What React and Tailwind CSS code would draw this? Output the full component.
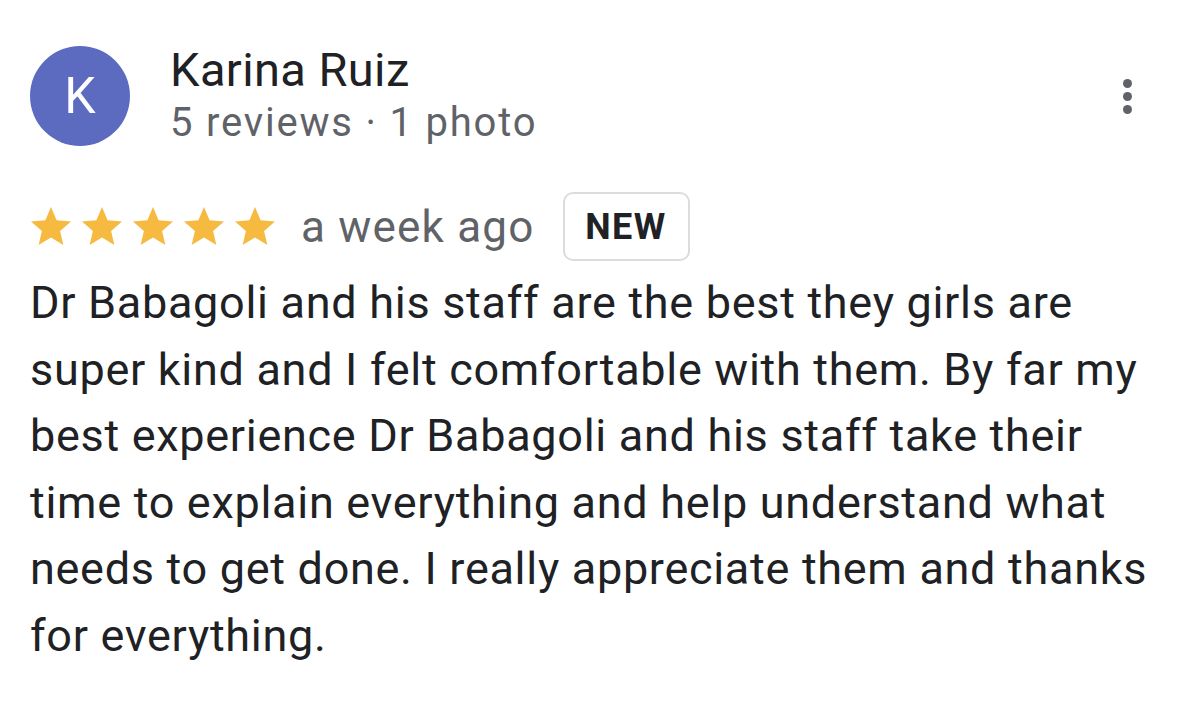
import React from "react";

const Star = () => (
    <svg viewBox="0 0 24 24" className="w-[48px] h-[48px]" fill="#f5ba3f">
        <path d="M12 17.27L18.18 21l-1.64-7.03L22 9.24l-7.19-.61L12 2 9.19 8.63 2 9.24l5.46 4.73L5.82 21z" />
    </svg>
);

export default function App() {
    return (
        <div className="w-[1200px] h-[709px] bg-white font-['Roboto',sans-serif] pl-[30px] pt-[44px]">
            <div className="flex items-start pr-[40px]">
                <div className="mt-[2px] w-[100px] h-[100px] rounded-full bg-[#5c6bc0] flex items-center justify-center text-white text-[50px] leading-none">
                    K
                </div>
                <div className="ml-[40px] flex flex-col">
                    <div className="text-[47px] leading-[52px] tracking-[0.4px] text-[#202124]">Karina Ruiz</div>
                    <div className="text-[40px] leading-[54px] tracking-[1.8px] text-[#5f6368]">5 reviews · 1 photo</div>
                </div>
                <div className="ml-auto mt-[35px] mr-[28px] flex flex-col gap-[4px]">
                    <span className="w-[9px] h-[9px] rounded-full bg-[#5f6368]"></span>
                    <span className="w-[9px] h-[9px] rounded-full bg-[#5f6368]"></span>
                    <span className="w-[9px] h-[9px] rounded-full bg-[#5f6368]"></span>
                </div>
            </div>

            <div className="flex items-center mt-[42px]">
                <div className="flex gap-[3px] items-center -ml-[3px]">
                    <Star />
                    <Star />
                    <Star />
                    <Star />
                    <Star />
                </div>
                <span className="ml-[22px] text-[44px] tracking-[1.2px] text-[#5f6368] leading-none">a week ago</span>
                <span className="ml-[28px] h-[69px] w-[127px] border-2 border-[#dadce0] rounded-[10px] flex items-center justify-center text-[36px] font-bold tracking-[1.5px] text-[#202124] leading-none">
                    NEW
                </span>
            </div>

            <p className="mt-[9px] w-[1145px] text-[45px] leading-[66.6px] tracking-[0.7px] text-[#202124]">
                Dr Babagoli and his staff are the best they girls are super kind and I felt comfortable with them. By far my best experience Dr Babagoli and his staff take their time to explain everything and help understand what needs to get done. I really appreciate them and thanks for everything.
            </p>
        </div>
    );
}
